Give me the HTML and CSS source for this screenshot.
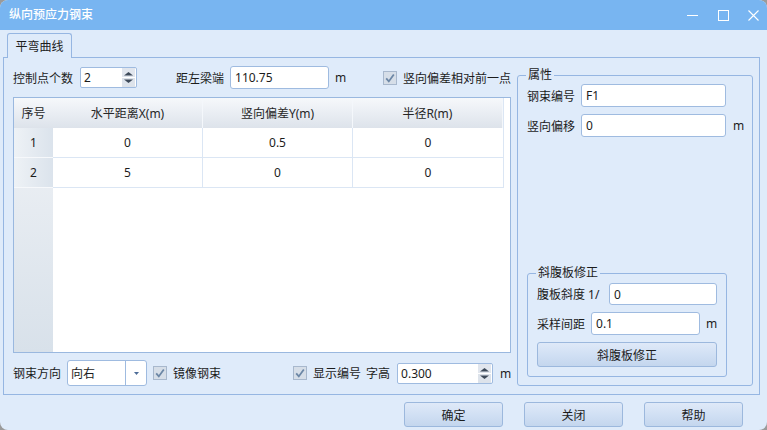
FILE: index.html
```html
<!DOCTYPE html>
<html lang="zh-CN">
<head>
<meta charset="utf-8">
<title>纵向预应力钢束</title>
<link rel="stylesheet" href="styles.css">
</head>
<body>
<div class="window">
  <div class="titlebar">
    <div class="title">纵向预应力钢束</div>
    <div class="wc wc-min"><svg width="11" height="11" viewBox="0 0 11 11"><path d="M0 5.5H11" stroke="#fff" stroke-width="1"/></svg></div>
    <div class="wc wc-max"><svg width="11" height="11" viewBox="0 0 11 11"><rect x="0.5" y="0.5" width="10" height="10" fill="none" stroke="#fff" stroke-width="1"/></svg></div>
    <div class="wc wc-close"><svg width="11" height="11" viewBox="0 0 11 11"><path d="M0.5 0.5L10.5 10.5M10.5 0.5L0.5 10.5" stroke="#fff" stroke-width="1.1"/></svg></div>
  </div>
  <div class="content">
    <div class="tabs"><div class="tab">平弯曲线</div></div>
    <div class="panel">
      <div class="left">
        <div class="row row1">
          <span class="lbl">控制点个数</span>
          <div class="spin sp1">
            <span class="val">2</span>
            <div class="spinbtn"><svg width="13" height="19" viewBox="0 0 13 19"><rect x="0" y="0" width="13" height="9" fill="#e1e6ee"/><rect x="0" y="10" width="13" height="9" fill="#dde3eb"/><path d="M2 7.5L6.5 4L11 7.5Z" fill="#3e4a5a"/><path d="M2 11.5L6.5 15L11 11.5Z" fill="#3e4a5a"/></svg></div>
          </div>
          <span class="lbl m-dist">距左梁端</span>
          <div class="input in-dist">110.75</div>
          <span class="unit u-dist">m</span>
          <span class="chk chk1"><svg width="14" height="14" viewBox="0 0 14 14"><rect x="0.5" y="0.5" width="13" height="13" fill="#d6dee8" stroke="#a8b8cd"/><path d="M3.2 7.4L5.8 10.4L10.8 3.4" fill="none" stroke="#6c87a6" stroke-width="1.8"/></svg></span>
          <span class="lbl chklbl">竖向偏差相对前一点</span>
        </div>
        <div class="grid">
          <div class="ghead">
            <div class="gh rh">序号</div>
            <div class="gh col">水平距离X(m)</div>
            <div class="gh col">竖向偏差Y(m)</div>
            <div class="gh col">半径R(m)</div>
            <div class="gh fill"></div>
          </div>
          <div class="gbody">
            <div class="rhcol">
              <div class="rhcell">1</div>
              <div class="rhcell">2</div>
            </div>
            <div class="gdata">
              <div class="grow"><div class="gc">0</div><div class="gc">0.5</div><div class="gc">0</div></div>
              <div class="grow"><div class="gc">5</div><div class="gc">0</div><div class="gc">0</div></div>
            </div>
          </div>
        </div>
        <div class="row row2">
          <span class="lbl">钢束方向</span>
          <div class="combo">
            <span class="val">向右</span>
            <span class="drop"><svg width="5" height="3" viewBox="0 0 5 3"><path d="M0 0H5L2.5 3Z" fill="#4d6c98"/></svg></span>
          </div>
          <span class="chk chk2"><svg width="14" height="14" viewBox="0 0 14 14"><rect x="0.5" y="0.5" width="13" height="13" fill="#d6dee8" stroke="#a8b8cd"/><path d="M3.2 7.4L5.8 10.4L10.8 3.4" fill="none" stroke="#6c87a6" stroke-width="1.8"/></svg></span>
          <span class="lbl chklbl">镜像钢束</span>
          <span class="chk chk3"><svg width="14" height="14" viewBox="0 0 14 14"><rect x="0.5" y="0.5" width="13" height="13" fill="#d6dee8" stroke="#a8b8cd"/><path d="M3.2 7.4L5.8 10.4L10.8 3.4" fill="none" stroke="#6c87a6" stroke-width="1.8"/></svg></span>
          <span class="lbl chklbl">显示编号</span>
          <span class="lbl m-zg">字高</span>
          <div class="spin sp2">
            <span class="val">0.300</span>
            <div class="spinbtn"><svg width="13" height="19" viewBox="0 0 13 19"><rect x="0" y="0" width="13" height="9" fill="#e1e6ee"/><rect x="0" y="10" width="13" height="9" fill="#dde3eb"/><path d="M2 7.5L6.5 4L11 7.5Z" fill="#3e4a5a"/><path d="M2 11.5L6.5 15L11 11.5Z" fill="#3e4a5a"/></svg></div>
          </div>
          <span class="unit u-zg">m</span>
        </div>
      </div>
      <div class="right">
        <div class="group g-attr">
          <div class="legend">属性</div>
          <div class="row frow f1">
            <span class="lbl">钢束编号</span>
            <div class="input in-attr">F1</div>
          </div>
          <div class="row frow f2">
            <span class="lbl">竖向偏移</span>
            <div class="input in-attr">0</div>
            <span class="unit u-attr">m</span>
          </div>
          <div class="group g-web">
            <div class="legend">斜腹板修正</div>
            <div class="row wrow w1">
              <span class="lbl lbl-slope">腹板斜度 1/</span>
              <div class="input in-slope">0</div>
            </div>
            <div class="row wrow w2">
              <span class="lbl">采样间距</span>
              <div class="input in-samp">0.1</div>
              <span class="unit u-samp">m</span>
            </div>
            <div class="btn btn-web">斜腹板修正</div>
          </div>
        </div>
      </div>
    </div>
    <div class="buttons">
      <div class="btn btn-main">确定</div>
      <div class="btn btn-main">关闭</div>
      <div class="btn btn-main">帮助</div>
    </div>
  </div>
</div>
</body>
</html>
```
FILE: styles.css
```css
* { box-sizing: border-box; }
html { background: #9a9a9a; }
body {
  margin: 0;
  width: 767px;
  height: 430px;
  overflow: hidden;
  font-family: "Noto Sans", "Noto Sans CJK SC", sans-serif;
  font-size: 12px;
  color: #1c1c1c;
}
.window {
  width: 767px;
  height: 430px;
  background: #dfebfa;
  border-radius: 8px;
  overflow: hidden;
  display: flex;
  flex-direction: column;
}
.titlebar {
  height: 30px;
  flex: none;
  background: #78b5f1;
  display: flex;
  align-items: center;
}
.title {
  flex: 1;
  padding-left: 9px;
  color: #fff;
  font-size: 12px;
  font-weight: 500;
  line-height: 30px;
}
.wc { height: 30px; display: flex; align-items: center; justify-content: center; }
.wc-min, .wc-max { width: 31px; }
.wc-close { width: 28px; }

.content { padding: 3px 7px 0 3px; }
.tabs { display: flex; padding-left: 4px; height: 24px; }
.tab {
  position: relative;
  z-index: 1;
  width: 65px;
  height: 25px;
  border: 1px solid #96b6e2;
  border-bottom: none;
  border-radius: 3px 3px 0 0;
  background: #dfebfa;
  display: flex;
  align-items: center;
  justify-content: center;
}
.panel {
  height: 338px;
  border: 1px solid #96b6e2;
  display: flex;
  gap: 6px;
  padding: 8px 6px 8px 9px;
}
.left { width: 498px; display: flex; flex-direction: column; }
.right { width: 236px; display: flex; flex-direction: column; }

.row { display: flex; align-items: center; }
.lbl { white-space: nowrap; flex: none; }
.unit { width: 12px; flex: none; }
.row1 { height: 23px; }
.row2 { height: 26px; margin-top: 7px; }

.input {
  background: #fff;
  border: 1px solid #9fbbe0;
  border-radius: 3px;
  padding-left: 4px;
  display: flex;
  align-items: center;
  flex: none;
}
.spin {
  background: #fff;
  border: 1px solid #9fbbe0;
  border-radius: 2px;
  height: 21px;
  display: flex;
  align-items: center;
  flex: none;
}
.spin .val { flex: 1; padding-left: 3px; }
.spinbtn { width: 14px; height: 19px; display: flex; }
.sp1 { width: 57px; margin-left: 7px; }
.m-dist { margin-left: 39px; }
.in-dist { width: 99px; height: 23px; margin-left: 6px; }
.u-dist { margin-left: 6px; }
.chk { width: 14px; height: 14px; display: flex; flex: none; }
.chk1 { margin-left: 36px; }
.chklbl { margin-left: 6px; }

.grid {
  margin-top: 8px;
  height: 256px;
  border: 1px solid #9ab8df;
  background: #fff;
  display: flex;
  flex-direction: column;
}
.ghead { height: 30px; display: flex; flex: none; }
.gh {
  display: flex;
  align-items: center;
  justify-content: center;
  color: #262626;
  background: linear-gradient(#f6f8fb, #dde3eb);
}
.gh.rh { width: 39px; }
.gh.col { width: 150px; border-right: 1px solid #f4f7fb; }
.gh.fill { flex: 1; background: #fff; border-left: 1px solid #dbe6f4; }
.gbody { flex: 1; display: flex; }
.rhcol {
  width: 39px;
  background: linear-gradient(#eef1f5, #d8e1ea);
}
.rhcell {
  height: 30px;
  display: flex;
  align-items: center;
  justify-content: center;
  background: linear-gradient(90deg, #eef2f6, #dbe3ec);
  border-bottom: 1px solid #f6f8fb;
}
.gdata { flex: 1; }
.grow { display: flex; height: 30px; width: 451px; border-bottom: 1px solid #dbe6f4; border-right: 1px solid #dbe6f4; }
.gc {
  width: 150px;
  display: flex;
  align-items: center;
  justify-content: center;
  border-right: 1px solid #dbe6f4;
}
.gc:last-child { border-right: none; }

.combo {
  width: 80px;
  height: 26px;
  margin-left: 6px;
  background: #fff;
  border: 1px solid #9fbbe0;
  border-radius: 3px;
  display: flex;
  align-items: center;
  flex: none;
}
.combo .val { flex: 1; padding-left: 3px; }
.combo .drop {
  width: 21px;
  height: 100%;
  border-left: 1px solid #9fbbe0;
  display: flex;
  align-items: center;
  justify-content: center;
}
.chk2 { margin-left: 6px; }
.chk3 { margin-left: 72px; }
.m-zg { margin-left: 5px; }
.sp2 { width: 96px; margin-left: 7px; }
.u-zg { margin-left: 7px; }

.group {
  border: 1px solid #96b6e2;
  border-radius: 3px;
  display: flex;
  flex-direction: column;
}
.legend {
  align-self: flex-start;
  line-height: 16px;
  height: 16px;
  margin-top: -9px;
  padding: 0 2px;
  background: #dfebfa;
}
.g-attr { margin-top: 9px; flex: 1; padding: 0 8px 8px 9px; }
.g-attr > .legend { margin-left: -1px; }
.frow .lbl { width: 48px; }
.f1 { margin-top: 1px; height: 23px; }
.f2 { margin-top: 7px; height: 23px; }
.in-attr { width: 145px; height: 23px; margin-left: 6px; }
.u-attr { margin-left: 7px; }

.g-web {
  margin-top: auto;
  width: 200px;
  padding: 0 9px 9px 9px;
}
.g-web > .legend { margin-left: -1px; }
.w1 { margin-top: 2px; height: 22px; }
.w2 { margin-top: 7px; height: 23px; }
.lbl-slope { width: 72px; }
.in-slope { width: 108px; height: 22px; }
.in-samp { width: 109px; height: 23px; margin-left: 6px; }
.u-samp { margin-left: 6px; }

.btn {
  border: 1px solid #9cb8dd;
  border-radius: 3px;
  background: linear-gradient(#dfe9f8, #d1e0f4 50%, #c4d6ee);
  display: flex;
  align-items: center;
  justify-content: center;
  flex: none;
}
.btn-web { width: 180px; height: 25px; margin-top: 7px; }
.buttons {
  margin-top: 7px;
  display: flex;
  justify-content: flex-end;
  gap: 21px;
  padding-right: 17px;
}
.btn-main { width: 99px; height: 25px; }
```
